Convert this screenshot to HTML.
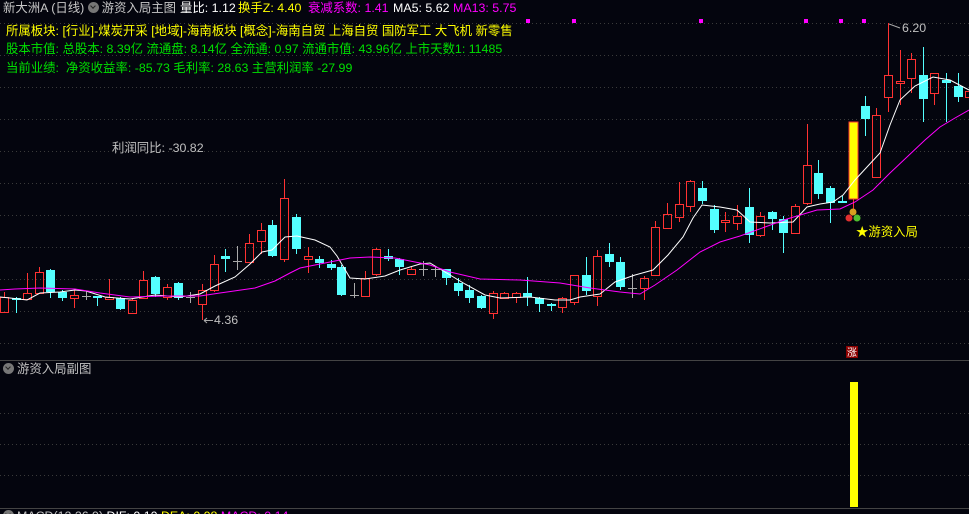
<!DOCTYPE html>
<html><head><meta charset="utf-8"><style>
html,body{margin:0;padding:0;background:#04050e;width:969px;height:514px;overflow:hidden}
body{position:relative;font-family:"Liberation Sans","Noto Sans CJK SC",sans-serif;font-size:12.4px}
.t{position:absolute;white-space:nowrap;line-height:14px}
.ic{display:inline-block;width:11px;height:11px;border-radius:50%;background:#777;vertical-align:-1px;margin-right:3px;position:relative}
.ic:after{content:"";position:absolute;left:3px;top:2px;width:3px;height:3px;border-right:1.5px solid #222;border-bottom:1.5px solid #222;transform:rotate(45deg)}
</style></head><body>
<svg id="s" width="969" height="514" style="position:absolute;left:0;top:0"></svg>
<div class="t" style="left:3px;top:1px;color:#c8c8c8">新大洲A (日线) <span class="ic"></span>游资入局主图</div>
<div class="t" style="left:180px;top:1px;color:#fff">量比: 1.12</div>
<div class="t" style="left:238px;top:1px;color:#ffff00">换手Z: 4.40</div>
<div class="t" style="left:308px;top:1px;color:#ff00ff">衰减系数: 1.41</div>
<div class="t" style="left:393px;top:1px;color:#fff">MA5: 5.62</div>
<div class="t" style="left:453px;top:1px;color:#ff00ff">MA13: 5.75</div>
<div class="t" style="left:6px;top:24px;color:#ffff00">所属板块: [行业]-煤炭开采 [地域]-海南板块 [概念]-海南自贸 上海自贸 国防军工 大飞机 新零售</div>
<div class="t" style="left:6px;top:42px;color:#00e000">股本市值: 总股本: 8.39亿 流通盘: 8.14亿 全流通: 0.97 流通市值: 43.96亿 上市天数1: 11485</div>
<div class="t" style="left:6px;top:61px;color:#00e000">当前业绩:&nbsp; 净资收益率: -85.73 毛利率: 28.63 主营利润率 -27.99</div>
<div class="t" style="left:112px;top:141px;color:#c0c0c0">利润同比: -30.82</div>
<div class="t" style="left:214px;top:313px;color:#c0c0c0">4.36</div>
<div class="t" style="left:902px;top:21px;color:#c0c0c0">6.20</div>
<div class="t" style="left:856px;top:225px;color:#ffff00">★游资入局</div>
<div class="t" style="left:3px;top:362px;color:#c0c0c0"><span class="ic"></span>游资入局副图</div>
<div class="t" style="left:3px;top:509px;color:#c0c0c0"><span class="ic"></span>MACD(12,26,9) <span style="color:#fff">DIF: 0.10</span> <span style="color:#ffff00">DEA: 0.08</span> <span style="color:#ff00ff">MACD: 0.14</span></div>
<script>
var s=document.getElementById('s'),h='';
function L(x1,y1,x2,y2,c,w,d){h+='<line x1="'+x1+'" y1="'+y1+'" x2="'+x2+'" y2="'+y2+'" stroke="'+c+'" stroke-width="'+(w||1)+'"'+(d?' stroke-dasharray="'+d+'"':'')+'/>';}
for(var y=23;y<=343;y+=32)L(0,y+.5,969,y+.5,'#3a3a3a',1,'1 3');
[413,444,475].forEach(function(y){L(0,y+.5,969,y+.5,'#3a3a3a',1,'1 3')});
L(0,360.5,969,360.5,'#444');L(0,508.5,969,508.5,'#444');
var C=[[0,'r',297,312,292,312],[12,'c',298,300,297,313],[23,'r',293,299,273,300],[35,'r',272,293,267,294],[46,'c',270,292,269,298],[58,'c',292,298,290,301],[70,'r',295,298,290,308],[82,'g',296,296,291,300],[93,'c',296,298,296,306],[105,'r',297,299,279,299],[116,'c',298,309,297,310],[128,'r',300,313,298,314],[139,'r',280,298,271,299],[151,'c',277,294,276,297],[163,'r',287,297,284,300],[174,'c',283,298,282,300],[186,'g',297,298,292,303],[198,'r',290,304,284,320],[210,'r',264,290,255,292],[221,'c',256,259,249,272],[233,'g',261,261,246,270],[245,'r',243,262,234,263],[257,'r',230,241,223,254],[268,'c',225,256,220,257],[280,'r',198,259,179,262],[292,'c',217,249,214,254],[304,'r',256,259,247,273],[315,'c',259,263,256,268],[327,'c',264,268,260,270],[337,'c',267,295,265,296],[350,'g',295,295,283,298],[361,'r',278,296,271,296],[372,'r',249,274,248,276],[384,'c',256,259,249,261],[395,'c',259,267,258,275],[407,'r',269,274,267,274],[419,'g',269,269,261,276],[431,'g',269,269,266,277],[442,'c',269,278,269,285],[454,'c',283,291,278,296],[465,'c',290,298,285,303],[477,'c',296,308,295,309],[489,'r',293,313,291,319],[500,'r',293,298,292,299],[512,'r',293,297,292,303],[523,'c',293,297,277,306],[535,'c',298,304,297,312],[547,'c',304,306,303,311],[558,'r',298,307,297,313],[570,'r',275,302,275,305],[582,'c',275,291,257,295],[593,'r',256,296,250,306],[605,'c',254,262,243,267],[616,'c',262,287,257,290],[628,'g',288,288,274,298],[640,'r',278,288,276,300],[651,'r',227,275,221,276],[663,'r',214,228,203,229],[675,'r',204,217,182,222],[686,'r',181,206,180,212],[698,'c',188,201,181,204],[710,'c',209,230,205,233],[721,'r',220,222,212,232],[733,'r',216,223,205,230],[745,'c',207,235,188,243],[756,'r',216,235,212,237],[768,'c',212,219,211,230],[779,'c',219,233,216,253],[791,'r',206,233,204,234],[803,'r',165,203,124,205],[814,'c',173,194,160,199],[826,'c',188,203,186,223],[838,'c',201,203,196,203],[861,'c',106,119,96,136],[872,'r',115,177,108,178],[884,'r',75,97,23,112],[896,'r',81,83,50,105],[907,'r',59,78,53,93],[919,'c',75,99,47,122],[930,'r',73,93,73,105],[942,'c',80,83,73,122],[954,'c',86,97,73,102],[965,'r',91,97,88,98]];
C.forEach(function(k){var x=k[0],t=k[1],a=Math.min(k[2],k[3]),b=Math.max(k[2],k[3]),cx=x+4.5;
 var col=t=='r'?'#ff3232':t=='c'?'#54ffff':'#aaaaaa';
 if(t=='r'){L(cx,k[4],cx,a,col);L(cx,b,cx,k[5],col);h+='<rect x="'+(x+.5)+'" y="'+(a+.5)+'" width="8" height="'+Math.max(b-a,1)+'" fill="none" stroke="'+col+'"/>';}
 else if(t=='c'){L(cx,k[4],cx,k[5],col);h+='<rect x="'+x+'" y="'+a+'" width="9" height="'+Math.max(b-a,2)+'" fill="'+col+'"/>';}
 else{L(cx,k[4],cx,k[5],col);L(x,a+.5,x+9,a+.5,col);}
});
L(853.5,199,853.5,211,'#ff3232');
h+='<rect x="849" y="122" width="9" height="77" fill="#ffff00" stroke="#ff3232" stroke-width="1"/>';
function P(pts,c){h+='<polyline fill="none" stroke="'+c+'" stroke-width="1" points="'+pts+'"/>';}
P('0,297 10,298 27,300 40,293 60,292 75,290 86,291 105,297 130,299 155,295 180,297 200,294 215,286 235,277 250,264 262,252 272,250 285,237 297,236 315,240 330,247 337,256 350,278 365,279 385,276 400,270 420,264 430,263 445,272 465,284 485,295 500,298 530,297 555,300 570,300 580,297 600,294 615,282 635,275 653,270 668,255 683,237 693,218 702,205 720,207 737,210 750,222 770,223 793,222 807,207 820,204 833,202 843,195 855,180 867,167 880,153 890,125 900,100 915,86 933,77 950,80 969,90','#ffffff');
P('0,290 15,289 40,288 75,289 100,293 130,297 165,296 200,296 220,293 255,288 275,281 290,273 300,268 315,265 330,262 350,258 370,257 395,258 430,265 450,272 480,279 520,280 560,283 590,288 620,292 640,294 655,285 677,270 700,252 720,242 740,236 765,227 787,219 817,210 840,209 855,202 873,190 890,173 907,157 925,140 940,127 955,118 969,110','#ff00ff');
[528,574,701,806,841,864].forEach(function(x){h+='<rect x="'+(x-2)+'" y="19" width="4" height="4" fill="#ff00ff"/>'});
L(204,320.5,213,320.5,'#aaa');L(204,320.5,207,318,'#aaa');L(204,320.5,207,323,'#aaa');
h+='<path d="M889 24 L900 28" stroke="#aaa" fill="none"/>';
h+='<circle cx="853" cy="212" r="3.5" fill="#d8a020"/><circle cx="849" cy="218" r="3.5" fill="#e03030"/><circle cx="857" cy="218" r="3.5" fill="#50c030"/>';
h+='<rect x="846" y="346" width="12" height="12" fill="#8b0000"/><text x="847" y="356" font-size="10" fill="#fff" font-family="Noto Sans CJK SC,sans-serif">涨</text>';
h+='<rect x="850" y="382" width="8" height="125" fill="#ffff00"/>';
s.innerHTML=h;
</script>
</body></html>
